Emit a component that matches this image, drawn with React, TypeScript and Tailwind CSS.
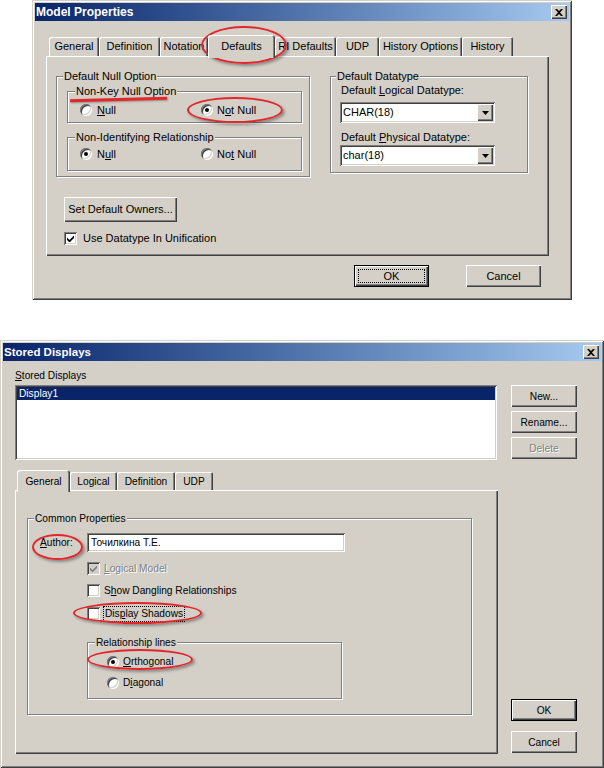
import React from "react";

const frame =
  "bg-[#D4D0C8] shadow-[inset_1px_1px_0_#D4D0C8,inset_-1px_-1px_0_#404040,inset_2px_2px_0_#ffffff,inset_-2px_-2px_0_#808080]";
const raised =
  "bg-[#D4D0C8] shadow-[inset_1px_1px_0_#ffffff,inset_-1px_-1px_0_#404040,inset_-2px_-2px_0_#808080]";
const sunkenEdge =
  "shadow-[inset_1px_1px_0_#808080,inset_-1px_-1px_0_#ffffff,inset_2px_2px_0_#404040,inset_-2px_-2px_0_#D4D0C8]";
const panel =
  "bg-[#D4D0C8] shadow-[inset_1px_1px_0_#ffffff,inset_-1px_-1px_0_#404040,inset_-2px_-2px_0_#808080]";
const disabledText = "text-[#808080] [text-shadow:1px_1px_0_#ffffff]";

function CloseButton() {
  return (
    <div className={`flex h-[14px] w-[16px] items-center justify-center ${raised}`}>
      <svg width="8" height="7" viewBox="0 0 8 7">
        <path d="M0 0h2l2 2 2-2h2L5 3.5 8 7H6L4 5 2 7H0l3-3.5z" fill="#000" />
      </svg>
    </div>
  );
}

function TitleBar({ title, className }: { title: string; className: string }) {
  return (
    <div className="flex h-[18px] items-center justify-between bg-linear-to-r from-[#0A246A] to-[#A6CAF0] pl-[1px] pr-[2px]">
      <span className={`font-bold text-white ${className}`}>{title}</span>
      <CloseButton />
    </div>
  );
}

function Tab({ children, className, active }: { children: React.ReactNode; className: string; active?: boolean }) {
  if (active) {
    return (
      <div
        className={`relative z-10 -mb-[2px] flex justify-center rounded-t-[3px] bg-[#D4D0C8] pt-[5px] shadow-[inset_1px_1px_0_#ffffff,inset_-1px_0_0_#404040,inset_-2px_0_0_#808080] ${className}`}
      >
        {children}
      </div>
    );
  }
  return (
    <div
      className={`flex items-center justify-center rounded-t-[2px] shadow-[inset_1px_1px_0_#ffffff,inset_-1px_0_0_#404040,inset_-2px_0_0_#808080] ${className}`}
    >
      {children}
    </div>
  );
}

function Radio({ checked }: { checked?: boolean }) {
  return (
    <span className={`flex h-[12px] w-[12px] shrink-0 items-center justify-center rounded-full bg-white ${sunkenEdge}`}>
      {checked && <span className="h-[4px] w-[4px] rounded-full bg-black" />}
    </span>
  );
}

function Check({ checked, disabled }: { checked?: boolean; disabled?: boolean }) {
  return (
    <span
      className={`flex h-[13px] w-[13px] shrink-0 items-center justify-center ${disabled ? "bg-[#D4D0C8]" : "bg-white"} ${sunkenEdge}`}
    >
      {checked && (
        <svg width="7" height="7" viewBox="0 0 7 7">
          <path d="M0 2.5L2.5 5 7 0.5V3L2.5 7.5 0 5z" fill={disabled ? "#808080" : "#000"} />
        </svg>
      )}
    </span>
  );
}

function Combo({ value }: { value: string }) {
  return (
    <div className={`-ml-[1px] flex h-[21px] w-[155px] items-center justify-between bg-white pl-[3px] pr-[2px] ${sunkenEdge}`}>
      <span>{value}</span>
      <span className={`flex h-[17px] w-[16px] items-center justify-center ${raised}`}>
        <svg width="7" height="4" viewBox="0 0 7 4">
          <path d="M0 0h7L3.5 4z" fill="#000" />
        </svg>
      </span>
    </div>
  );
}

function Group({
  label,
  className,
  labelClass = "left-[6px]",
  children,
}: {
  label: string;
  className: string;
  labelClass?: string;
  children?: React.ReactNode;
}) {
  return (
    <div className={`relative shrink-0 border border-[#808080] shadow-[inset_1px_1px_0_#ffffff,1px_1px_0_#ffffff] ${className}`}>
      <span className={`absolute -top-[7px] bg-[#D4D0C8] px-[1px] ${labelClass}`}>{label}</span>
      {children}
    </div>
  );
}

function Button({ children, className, disabled }: { children: React.ReactNode; className: string; disabled?: boolean }) {
  return (
    <div className={`flex items-center justify-center ${raised} ${className} ${disabled ? disabledText : ""}`}>
      {children}
    </div>
  );
}

function DefaultButton({ children, className, focus }: { children: React.ReactNode; className: string; focus?: boolean }) {
  return (
    <div className={`flex items-center justify-center border border-black ${raised} ${className}`}>
      {focus ? (
        <div className="flex h-[calc(100%-6px)] w-[calc(100%-6px)] items-center justify-center border border-dotted border-black">
          {children}
        </div>
      ) : (
        children
      )}
    </div>
  );
}

function ModelProperties() {
  return (
    <div className={`ml-[32px] h-[300px] w-[540px] p-[3px] ${frame}`}>
      <TitleBar title="Model Properties" className="text-[12px]" />
      <div className="ml-[11px] mt-[14px] w-[503px]">
        <div className="flex h-[21px] items-end pl-[3px]">
          <Tab className="h-[19px] w-[50px]">General</Tab>
          <Tab className="h-[19px] w-[61px]">Definition</Tab>
          <Tab className="h-[19px] w-[48px]">Notation</Tab>
          <Tab active className="h-[23px] w-[67px]">
            Defaults
          </Tab>
          <Tab className="h-[19px] w-[61px]">RI Defaults</Tab>
          <Tab className="h-[19px] w-[43px]">UDP</Tab>
          <Tab className="h-[19px] w-[83px]">History Options</Tab>
          <Tab className="h-[19px] w-[51px]">History</Tab>
        </div>
        <div className={`h-[200px] w-[503px] pl-[10px] pt-[20px] ${panel}`}>
          <div className="flex items-start">
            <Group label="Default Null Option" className="h-[101px] w-[254px] pl-[10px] pt-[14px]">
              <Group label="Non-Key Null Option" labelClass="left-[7px]" className="h-[32px] w-[235px] pl-[12px] pt-[12px]">
                <div className="flex h-[12px] items-center">
                  <div className="flex w-[121px] items-center gap-[5px]">
                    <Radio />
                    <span>
                      <u>N</u>ull
                    </span>
                  </div>
                  <div className="flex items-center gap-[4px]">
                    <Radio checked />
                    <span>
                      N<u>o</u>t Null
                    </span>
                  </div>
                </div>
              </Group>
              <Group
                label="Non-Identifying Relationship"
                labelClass="left-[7px]"
                className="mt-[14px] h-[34px] w-[235px] pl-[12px] pt-[10px]"
              >
                <div className="flex h-[12px] items-center">
                  <div className="flex w-[121px] items-center gap-[5px]">
                    <Radio checked />
                    <span>
                      N<u>u</u>ll
                    </span>
                  </div>
                  <div className="flex items-center gap-[4px]">
                    <Radio />
                    <span>
                      No<u>t</u> Null
                    </span>
                  </div>
                </div>
              </Group>
            </Group>
            <Group label="Default Datatype" labelClass="left-[5px]" className="ml-[20px] h-[97px] w-[198px] pl-[10px] pt-[7px]">
              <div className="h-[13px]">
                Default <u>L</u>ogical Datatype:
              </div>
              <div className="mt-[5px]">
                <Combo value="CHAR(18)" />
              </div>
              <div className="mt-[8px] h-[13px]">
                Default <u>P</u>hysical Datatype:
              </div>
              <div className="mt-[1px]">
                <Combo value="char(18)" />
              </div>
            </Group>
          </div>
          <Button className="ml-[8px] mt-[20px] h-[25px] w-[113px]">Set Default Owners...</Button>
          <div className="ml-[8px] mt-[10px] flex h-[13px] items-center gap-[6px]">
            <Check checked />
            <span>Use Datatype In Unification</span>
          </div>
        </div>
      </div>
      <div className="mt-[9px] flex justify-end gap-[37px] pr-[28px]">
        <DefaultButton focus className="h-[22px] w-[75px]">
          OK
        </DefaultButton>
        <Button className="h-[22px] w-[75px]">Cancel</Button>
      </div>
    </div>
  );
}

function StoredDisplays() {
  return (
    <div className={`mt-[40px] h-[428px] w-[604px] p-[3px] text-[10.2px] ${frame}`}>
      <TitleBar title="Stored Displays" className="text-[11.5px]" />
      <div className="flex">
        <div className="ml-[12px] w-[483px]">
          <div className="mt-[8px] h-[13px]">
            <u>S</u>tored Displays
          </div>
          <div className={`mt-[3px] h-[75px] w-[482px] bg-white p-[2px] ${sunkenEdge}`}>
            <div className="h-[13px] bg-[#0A246A] pl-[2px] text-white">Display1</div>
          </div>
          <div className="mt-[10px] flex h-[20px] items-end pl-[2px]">
            <Tab active className="h-[22px] w-[53px]">
              General
            </Tab>
            <Tab className="h-[18px] w-[47px]">Logical</Tab>
            <Tab className="h-[18px] w-[58px]">Definition</Tab>
            <Tab className="h-[18px] w-[38px]">UDP</Tab>
          </div>
          <div className={`h-[264px] w-[483px] pl-[12px] pt-[28px] ${panel}`}>
            <Group label="Common Properties" className="h-[197px] w-[445px] pl-[12px] pt-[14px]">
              <div className="flex h-[19px] items-center">
                <span className="w-[47px]">
                  <u>A</u>uthor:
                </span>
                <div className={`flex h-[19px] w-[258px] items-center bg-white pl-[4px] ${sunkenEdge}`}>Точилкина Т.Е.</div>
              </div>
              <div className="ml-[47px] mt-[10px] flex h-[13px] items-center gap-[4px]">
                <Check checked disabled />
                <span className={disabledText}>
                  <u>L</u>ogical Model
                </span>
              </div>
              <div className="ml-[47px] mt-[9px] flex h-[13px] items-center gap-[4px]">
                <Check />
                <span>
                  S<u>h</u>ow Dangling Relationships
                </span>
              </div>
              <div className="ml-[47px] mt-[10px] flex h-[13px] items-center gap-[3px]">
                <Check />
                <span className="border border-dotted border-black px-[1px] leading-[14px]">
                  Dis<u>p</u>lay Shadows
                </span>
              </div>
              <Group label="Relationship lines" labelClass="left-[7px]" className="ml-[47px] mt-[22px] h-[57px] w-[255px] pl-[19px] pt-[12px]">
                <div className="flex h-[13px] items-center gap-[4px]">
                  <Radio checked />
                  <span>
                    <u>O</u>rthogonal
                  </span>
                </div>
                <div className="mt-[8px] flex h-[13px] items-center gap-[4px]">
                  <Radio />
                  <span>
                    D<u>i</u>agonal
                  </span>
                </div>
              </Group>
            </Group>
          </div>
        </div>
        <div className="ml-[13px] flex w-[66px] flex-col">
          <Button className="mt-[24px] h-[22px]">New...</Button>
          <Button className="mt-[4px] h-[22px]">Rename...</Button>
          <Button disabled className="mt-[4px] h-[22px]">
            Delete
          </Button>
          <DefaultButton className="mt-[240px] h-[22px]">OK</DefaultButton>
          <Button className="mt-[10px] h-[22px]">Cancel</Button>
        </div>
      </div>
    </div>
  );
}

// red hand-drawn annotations that sit over both screenshots
function Marks() {
  const ring =
    "pointer-events-none absolute rounded-[50%] border-2 border-[#E3262B] shadow-[2px_2px_3px_rgba(0,0,0,0.35)]";
  return (
    <>
      <div className={`${ring} left-[201px] top-[26px] h-[38px] w-[86px]`} />
      <div className={`${ring} left-[187px] top-[97px] h-[26px] w-[96px]`} />
      <div className="pointer-events-none absolute left-[70px] top-[98px] h-[3px] w-[97px] -rotate-[1.5deg] bg-[#E3262B] shadow-[1px_1px_2px_rgba(0,0,0,0.3)]" />
      <div className={`${ring} left-[32px] top-[534px] h-[26px] w-[51px]`} />
      <div className={`${ring} left-[73px] top-[602px] h-[22px] w-[129px]`} />
      <div className={`${ring} left-[87px] top-[649px] h-[21px] w-[106px]`} />
    </>
  );
}

export default function App() {
  return (
    <div className="relative h-[768px] w-[604px] overflow-hidden bg-white font-['Liberation_Sans',Arial,sans-serif] text-[11px] leading-[13px] text-black">
      <ModelProperties />
      <StoredDisplays />
      <Marks />
    </div>
  );
}
